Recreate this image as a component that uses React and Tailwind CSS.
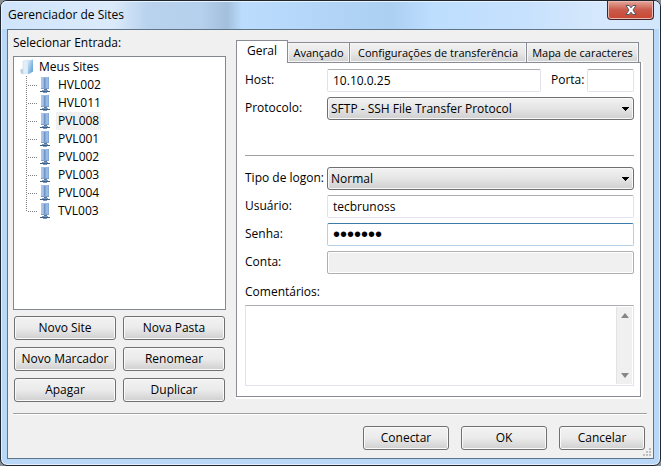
import { useState } from "react";

const sites = ["HVL002", "HVL011", "PVL008", "PVL001", "PVL002", "PVL003", "PVL004", "TVL003"];
const tabs = [
  { name: "Geral", width: "w-[52px]" },
  { name: "Avançado", width: "w-[62px]" },
  { name: "Configurações de transferência", width: "w-[177px]" },
  { name: "Mapa de caracteres", width: "w-[112px]" },
];
const fieldBase =
  "h-[23px] min-w-0 rounded-[2px] border border-[#e2e3ea] border-t-[#abadb3] bg-white pl-[5px] pb-px outline-none";

function FolderIcon() {
  return (
    <svg width="16" height="16" viewBox="0 0 16 16" aria-hidden="true">
      <defs>
        <linearGradient id="folder" x1="0" x2="1" y1="0" y2="1">
          <stop offset="0" stopColor="#d8ecfb" />
          <stop offset="1" stopColor="#4f94d2" />
        </linearGradient>
      </defs>
      <path d="M0 11 3 9.500V15L1 14.500Z" fill="#b9cfe2" />
      <path d="M3 2 8 1V14L3 15Z" fill="#e4eef6" stroke="#c3d4e2" strokeWidth=".5" />
      <path d="M8 1.500 13 .5V12.500L8 15.500Z" fill="url(#folder)" />
    </svg>
  );
}

function ServerIcon() {
  return (
    <svg width="12" height="16" viewBox="0 0 12 16" aria-hidden="true" shapeRendering="crispEdges">
      <rect x="2" y="0" width="8" height="12" fill="#98bae3" />
      <rect x="2" y="0" width="2" height="12" fill="#a9c6ea" />
      <rect x="5" y="1" width="1" height="11" fill="#6f94c4" />
      <rect x="6" y="1" width="1" height="11" fill="#84a8d6" />
      <rect x="9" y="0" width="1" height="12" fill="#86abd8" />
      <rect x="2" y="11" width="8" height="1" fill="#7f9fc8" />
      <rect x="5" y="12" width="3" height="2" fill="#54779f" />
      <rect x="3" y="13" width="6" height="1" fill="#7d97b8" />
      <rect x="1" y="14" width="10" height="1" fill="#3d618f" />
      <rect x="4" y="15" width="4" height="1" fill="#7d97b8" />
    </svg>
  );
}

function PushButton({ children, className = "" }) {
  return (
    <button
      type="button"
      className={`h-6 rounded-[3px] border border-[#707070] bg-linear-to-b from-[#f2f2f2] from-0% via-[#ebebeb] via-50% to-[#cfcfcf] pb-px text-center leading-4 whitespace-nowrap shadow-[inset_0_0_0_1px_#fafafa] ${className}`}
    >
      {children}
    </button>
  );
}

function Dropdown({ id, value }) {
  return (
    <div className="relative min-w-0 flex-1">
      <select
        id={id}
        defaultValue={value}
        className="block h-[23px] w-full appearance-none rounded-[3px] border border-[#707070] bg-linear-to-b from-[#f2f2f2] from-0% via-[#e5e5e5] via-50% to-[#cfcfcf] pl-[3px] shadow-[inset_0_0_0_1px_#f8f8f8] outline-none"
      >
        <option>{value}</option>
      </select>
      <svg className="pointer-events-none absolute top-[10px] right-[5px]" width="7" height="4" viewBox="0 0 7 4" shapeRendering="crispEdges" aria-hidden="true">
        <path d="M0 0H7V1H6V2H5V3H4V4H3V3H2V2H1V1H0Z" fill="#000" />
      </svg>
    </div>
  );
}

function Row({ id, label, children }) {
  return (
    <div className="flex h-[23px] items-center">
      <label htmlFor={id} className="w-[82px] shrink-0 pb-px whitespace-nowrap">
        {label}
      </label>
      {children}
    </div>
  );
}

function SiteTree() {
  const [selected, setSelected] = useState("PVL008");
  return (
    <div role="tree" aria-label="Selecionar Entrada" className="flex-1 border border-[#828790] bg-white pt-px pl-[6px]">
      <div role="treeitem" className="flex h-[18px] items-center">
        <FolderIcon />
        <span className="px-[3px]">Meus Sites</span>
      </div>
      <ul role="group" className="ml-[6px]">
        {sites.map((site) => (
          <li
            key={site}
            role="treeitem"
            aria-selected={site === selected}
            onClick={() => setSelected(site)}
            className="group flex h-[18px] items-center"
          >
            <span className="h-full w-px bg-[repeating-linear-gradient(#808080_0_1px,#fff_1px_2px)] group-last:h-[10px] group-last:self-start" />
            <span className="mt-px h-px w-[10px] bg-[repeating-linear-gradient(90deg,#fff_0_1px,#808080_1px_2px)]" />
            <span className="ml-[2px]">
              <ServerIcon />
            </span>
            <span className={`ml-[5px] px-[2px] leading-[18px] ${site === selected ? "bg-[#f0f0f0]" : ""}`}>{site}</span>
          </li>
        ))}
      </ul>
    </div>
  );
}

function TabStrip() {
  return (
    <div role="tablist" className="flex items-end">
      {tabs.map(({ name, width }, i) => (
        <button
          key={name}
          type="button"
          role="tab"
          aria-selected={i === 0}
          className={`${width} ${
            i === 0
              ? "z-10 -mb-px h-[23px] border border-b-0 border-[#898c95] bg-white pb-[2px] leading-4"
              : "h-[20px] border border-b-0 border-l-0 border-[#898c95] bg-linear-to-b from-[#f2f2f2] via-[#e8e8e8] via-50% to-[#d2d2d2] text-[11px] leading-4 whitespace-nowrap shadow-[inset_0_0_0_1px_#f6f6f6]"
          }`}
        >
          {name}
        </button>
      ))}
    </div>
  );
}

function GeneralPanel() {
  return (
    <div role="tabpanel" className="flex flex-1 flex-col border border-[#898c95] bg-white pt-[6px] pr-[6px] pb-[10px] pl-2 shadow-[1px_1px_0_1px_#fff]">
      <Row id="host" label="Host:">
        <input id="host" defaultValue="10.10.0.25" className={`${fieldBase} flex-1`} />
        <label htmlFor="port" className="ml-[10px] w-[36px] shrink-0 pb-px">
          Porta:
        </label>
        <input id="port" className={`${fieldBase} w-[47px]`} />
      </Row>
      <div className="mt-[5px]">
        <Row id="protocol" label="Protocolo:">
          <Dropdown id="protocol" value="SFTP - SSH File Transfer Protocol" />
        </Row>
      </div>
      <hr className="mt-[35px] mb-[11px] border-t border-[#a0a0a0]" />
      <div className="flex flex-col gap-[5px]">
        <Row id="logon" label="Tipo de logon:">
          <Dropdown id="logon" value="Normal" />
        </Row>
        <Row id="user" label="Usuário:">
          <input id="user" defaultValue="tecbrunoss" className={`${fieldBase} flex-1`} />
        </Row>
        <Row id="password" label="Senha:">
          <input
            id="password"
            type="password"
            defaultValue="sitepwd"
            className="h-[23px] min-w-0 flex-1 rounded-[2px] border border-[#b5cfe7] border-t-[#3d7bad] bg-white pl-[5px] font-['Liberation_Sans',sans-serif] text-[20px] outline-none"
          />
        </Row>
        <Row id="account" label="Conta:">
          <input id="account" disabled className="h-[23px] min-w-0 flex-1 rounded-[2px] border border-[#afafaf] bg-[#f0f0f0] shadow-[inset_0_0_0_1px_#fff]" />
        </Row>
      </div>
      <label htmlFor="comments" className="mt-[10px] mb-[5px] leading-4">
        Comentários:
      </label>
      <div className="flex min-h-[81px] flex-1 border border-[#e2e3ea] border-t-[#abadb3] p-px">
        <textarea id="comments" className="min-w-0 flex-1 resize-none outline-none" />
        <div className="flex w-4 flex-col items-center justify-between border-l border-[#e3e3e3] bg-[#f0f0f0] py-[6px]" aria-hidden="true">
          <svg width="8" height="5" viewBox="0 0 8 5">
            <path d="M4 0 8 5H0Z" fill="#868686" />
          </svg>
          <svg width="8" height="5" viewBox="0 0 8 5">
            <path d="M4 5 8 0H0Z" fill="#868686" />
          </svg>
        </div>
      </div>
    </div>
  );
}

export default function App() {
  return (
    <div className="flex min-h-screen bg-[#8b8f94] font-['Open_Sans',sans-serif] text-[12px] leading-4 text-black">
      <div className="flex min-w-0 flex-1 flex-col rounded-[7px] border border-[#20262f] bg-[#b9d8f8] px-[6px] pb-[6px] shadow-[inset_0_0_0_1px_#e4f1fd]">
        <header className="-mx-[6px] flex h-[28px] items-start rounded-t-[6px] border-t border-l border-[#e8f3fe] bg-[linear-gradient(90deg,#cfe4fb_0,#dcebfb_110px,#b9d3ee_145px,#b5d0ec_200px,#a2bfdc_225px,#bbdcfd_240px,#acd0f2_390px,#bddefe_430px,#c6e1fd_520px,#d6e8fc_600px,#d2e6fc_100%)] pr-[6px] pl-[6px]">
          <h1 className="flex-1 pt-[5px]">Gerenciador de Sites</h1>
          <button type="button" aria-label="Fechar" className="-mt-px flex h-[19px] w-[47px] items-center justify-center rounded-b-[4px] border border-t-0 border-[#43222a] bg-linear-to-b from-[#e3a79b] via-[#c9594a] via-50% to-[#c8472f] shadow-[inset_0_0_0_1px_#eab8ae]">
            <svg width="12" height="10" viewBox="0 0 12 10" aria-hidden="true">
              <path d="M1 .5H4.200L6 2.800 7.800 .5H11L8 5 11 9.500H7.800L6 7.200 4.200 9.500H1L4 5Z" fill="#fff" stroke="#535666" strokeWidth="1" />
            </svg>
          </button>
        </header>
        <main className="flex flex-1 flex-col border border-[#5f7486] bg-[#f0f0f0] pr-[6px] pl-[5px]">
          <div className="flex flex-1 gap-[10px]">
            <section className="flex w-[213px] shrink-0 flex-col pt-[5px]">
              <h2 className="mb-[5px]">Selecionar Entrada:</h2>
              <SiteTree />
              <div className="mt-[6px] mb-[11px] grid grid-cols-2 gap-[7px] px-px">
                <PushButton>Novo Site</PushButton>
                <PushButton>Nova Pasta</PushButton>
                <PushButton>Novo Marcador</PushButton>
                <PushButton>Renomear</PushButton>
                <PushButton>Apagar</PushButton>
                <PushButton>Duplicar</PushButton>
              </div>
            </section>
            <section className="mr-[6px] mb-4 flex min-w-0 flex-1 flex-col pt-[10px]">
              <TabStrip />
              <GeneralPanel />
            </section>
          </div>
          <hr className="border-t border-[#a0a0a0] shadow-[0_1px_0_#fff]" />
          <footer className="relative flex justify-end gap-3 pt-3 pr-[2px] pb-2">
            <PushButton className="w-[86px]">Conectar</PushButton>
            <PushButton className="w-[86px]">OK</PushButton>
            <PushButton className="w-[86px]">Cancelar</PushButton>
            <svg className="absolute right-[-4px] bottom-[2px]" width="8" height="8" viewBox="0 0 8 8" shapeRendering="crispEdges" aria-hidden="true">
              <path d="M6 0h2v2h-2zM3 3h2v2h-2zM6 3h2v2h-2zM0 6h2v2h-2zM3 6h2v2h-2zM6 6h2v2h-2z" fill="#bfbfbf" />
            </svg>
          </footer>
        </main>
      </div>
    </div>
  );
}
